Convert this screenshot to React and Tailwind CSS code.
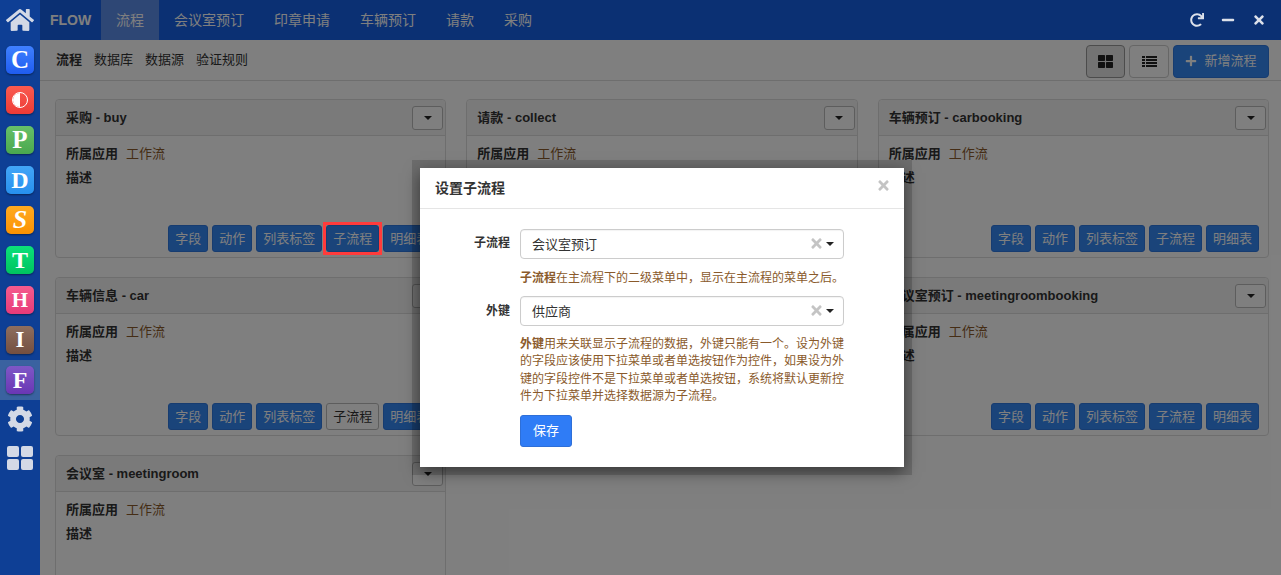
import React from "react";
import { FaHome, FaCog, FaPlus, FaTimes, FaMinus, FaRedo, FaThLarge } from "react-icons/fa";

const cjk = { fontFamily: '"Liberation Sans","Noto Sans CJK SC",sans-serif' };

const logos = [
  ["C", "from-[#3f80ff] to-[#1f5cf0]", "text-[25px]"],
  ["O", "from-[#f95a50] to-[#ee3a35]", "text-[24px]"],
  ["P", "from-[#66c069] to-[#4aa84e]", "text-[25px]"],
  ["D", "from-[#42a5f7] to-[#2690ee]", "text-[24px]"],
  ["S", "from-[#ffaa1f] to-[#fb9200]", "text-[26px] italic"],
  ["T", "from-[#0ce07a] to-[#00c45f]", "text-[24px]"],
  ["H", "from-[#f45b8e] to-[#e83a78]", "text-[21px]"],
  ["I", "from-[#8d6e5f] to-[#744f40]", "text-[23px]"],
  ["F", "from-[#7e57c6] to-[#6a36b4]", "text-[24px]"],
];

function Logo({ l, active }) {
  return (
    <div className={`h-10 flex items-center justify-center ${active ? "bg-[#3a62a0]" : ""}`}>
      <div className={`w-7 h-7 rounded-[5px] bg-gradient-to-b ${l[1]} shadow-[0_1px_2px_rgba(0,0,0,0.45)] flex items-center justify-center text-white font-bold leading-[28px] ${l[2]}`} style={{ fontFamily: '"Liberation Serif",serif' }}>
        {l[0] === "O" ? (
          <span className="relative w-4 h-4 rounded-full border border-white overflow-hidden flex">
            <span className="w-1/2 h-full bg-white" />
          </span>
        ) : l[0]}
      </div>
    </div>
  );
}

function Btn({ children, marked }) {
  return (
    <span className="relative shrink-0 h-[27px] px-[6px] rounded-[3px] bg-[#3488f5] border border-[#2e78e0] text-white flex items-center text-[13px] whitespace-nowrap">
      {children}
      {marked && <span className="absolute -inset-[4px] z-20 border-[3px] border-[#ff3b3b]" />}
    </span>
  );
}

function Caret({ className = "" }) {
  return <span className={`inline-block w-0 h-0 border-x-[4px] border-x-transparent border-t-[4px] border-t-[#222] ${className}`} />;
}

function Card({ name, code, active, marked }) {
  return (
    <div className="h-[159px] rounded-[4px] border border-[#ddd] bg-white flex flex-col">
      <div className="h-[36px] shrink-0 rounded-t-[4px] bg-[#f5f5f5] border-b border-[#ddd] pl-[10px] pr-[2px] flex items-center justify-between">
        <span className="text-[13px] font-bold text-[#333]">{name} - {code}</span>
        <span className="w-[31px] h-[24px] rounded-[3px] border border-[#bbb] bg-white flex items-center justify-center"><Caret /></span>
      </div>
      <div className="flex-1 pt-[6px] pb-[5px] pl-[10px] pr-[9px] flex flex-col text-[13px] text-[#333] leading-[24px]">
        <div><b>所属应用</b><span className="ml-2 text-[#8a5a2b]">工作流</span></div>
        <div><b>描述</b></div>
        <div className="mt-auto flex justify-end gap-[4px]">
          <Btn>字段</Btn>
          <Btn>动作</Btn>
          <Btn>列表标签</Btn>
          {active ? (
            <span className="shrink-0 h-[27px] px-[6px] rounded-[3px] bg-white border border-[#bbb] text-[#333] flex items-center whitespace-nowrap">子流程</span>
          ) : (
            <Btn marked={marked}>子流程</Btn>
          )}
          <Btn>明细表</Btn>
        </div>
      </div>
    </div>
  );
}

function Select({ value }) {
  return (
    <div className="h-[30px] rounded-[4px] border border-[#ccc] bg-white flex items-center pl-[11px] pr-[9px] text-[13px] text-[#333] shadow-[inset_0_1px_1px_rgba(0,0,0,0.05)]">
      <span className="flex-1 pt-[1px]">{value}</span>
      <FaTimes className="text-[#c4c4c4] text-[15px] mr-[2px] -mt-[2px]" />
      <Caret />
    </div>
  );
}

function ThListIcon() {
  return (
    <svg width="15" height="11" viewBox="0 0 15 11" fill="#222">
      <rect x="0" y="0" width="3" height="2" />
      <rect x="4" y="0" width="11" height="2" />
      <rect x="0" y="3" width="3" height="2" />
      <rect x="4" y="3" width="11" height="2" />
      <rect x="0" y="6" width="3" height="2" />
      <rect x="4" y="6" width="11" height="2" />
      <rect x="0" y="9" width="3" height="2" />
      <rect x="4" y="9" width="11" height="2" />
    </svg>
  );
}

export default function App() {
  const tabs = ["印章申请", "车辆预订", "请款", "采购"];
  return (
    <div className="relative h-[575px] w-full overflow-hidden flex bg-white text-[14px]" style={cjk}>
      <aside className="relative z-20 w-10 shrink-0 bg-[#0e3f95] flex flex-col">
        <div className="h-10 flex items-center justify-center text-[#d3d9e6] text-[28px]"><FaHome /></div>
        <div>
          {logos.map((l, i) => <Logo key={l[0]} l={l} active={i === 8} />)}
        </div>
        <div className="h-10 flex items-center justify-center text-[#d3d9e6] text-[26px] -mt-[1px]"><FaCog /></div>
        <div className="h-[38px] flex items-center justify-center">
          <div className="grid grid-cols-2 gap-[2px] w-[26px]">
            <i className="h-[11px] rounded-[2px] bg-[#d3d9e6]" />
            <i className="h-[11px] rounded-[2px] bg-[#d3d9e6]" />
            <i className="h-[11px] rounded-[2px] bg-[#d3d9e6]" />
            <i className="h-[11px] rounded-[2px] bg-[#d3d9e6]" />
          </div>
        </div>
      </aside>

      <main className="flex-1 min-w-0 flex flex-col">
        <header className="h-10 shrink-0 bg-[#1660e6] flex items-center text-white">
          <span className="w-[61px] pl-[10px] font-bold text-[14px]">FLOW</span>
          <span className="w-[58px] h-10 flex items-center justify-center bg-[#5d8eeb]">流程</span>
          <span className="px-[15px]">会议室预订</span>
          {tabs.map(t => <span key={t} className="px-[15px]">{t}</span>)}
          <div className="relative z-20 ml-auto flex items-center gap-[17px] pr-[15px] text-[14px] text-[#dde1ea]">
            <FaRedo />
            <FaMinus />
            <FaTimes />
          </div>
        </header>

        <div className="h-[41px] shrink-0 border-b border-[#ddd] bg-white flex items-center pl-[16px] pr-[12px] gap-[12px] text-[13px] text-[#333]">
          <b>流程</b><span>数据库</span><span>数据源</span><span>验证规则</span>
          <div className="ml-auto flex items-center gap-[4px] mt-[2px]">
            <span className="w-[39px] h-[33px] rounded-[4px] border border-[#999] bg-[#e6e6e6] flex items-center justify-center text-[#222] text-[15px]"><FaThLarge /></span>
            <span className="w-[40px] h-[33px] rounded-[4px] border border-[#ccc] bg-white flex items-center justify-center"><ThListIcon /></span>
            <span className="w-[96px] h-[33px] rounded-[4px] bg-[#3488f5] border border-[#2e78e0] text-white flex items-center justify-center gap-[7px] text-[13px]"><FaPlus className="text-[12px]" />新增流程</span>
          </div>
        </div>

        <div className="flex-1 min-h-0 overflow-hidden pt-[18px] pl-[15px] pr-[12px] grid grid-cols-3 gap-x-[20px] gap-y-[19px] content-start bg-white">
          <Card name="采购" code="buy" marked />
          <Card name="请款" code="collect" />
          <Card name="车辆预订" code="carbooking" />
          <Card name="车辆信息" code="car" active />
          <Card name="印章申请" code="seal" />
          <Card name="会议室预订" code="meetingroombooking" />
          <Card name="会议室" code="meetingroom" />
        </div>
      </main>

      <div className="absolute inset-0 z-10 bg-black/50" />

      <div className="absolute z-30 left-[420px] top-[168px] w-[484px] h-[299px] bg-white shadow-[0_5px_15px_rgba(0,0,0,0.5),0_0_0_8px_rgba(0,0,0,0.15)] flex flex-col">
        <div className="h-[41px] shrink-0 border-b border-[#e5e5e5] pl-[15px] pr-[13px] flex items-center justify-between">
          <b className="text-[14px] text-[#333]">设置子流程</b>
          <FaTimes className="text-[#c4c4c4] text-[15px] -mt-[6px]" />
        </div>
        <div className="pt-[20px] pl-[100px] pr-[60px] flex flex-col text-[#333]">
          <div className="relative">
            <b className="absolute -left-[100px] w-[90px] text-right top-[4px] leading-[20px] text-[12px]">子流程</b>
            <Select value="会议室预订" />
          </div>
          <p className="mt-[11px] mb-[9px] text-[12px] leading-[17px] text-[#8a5a2b] whitespace-nowrap"><b>子流程</b>在主流程下的二级菜单中，显示在主流程的菜单之后。</p>
          <div className="relative">
            <b className="absolute -left-[100px] w-[90px] text-right top-[5px] leading-[20px] text-[12px]">外键</b>
            <Select value="供应商" />
          </div>
          <p className="mt-[10px] w-[327px] text-[12px] leading-[17.3px] text-[#8a5a2b]"><b>外键</b>用来关联显示子流程的数据，外键只能有一个。设为外键的字段应该使用下拉菜单或者单选按钮作为控件，如果设为外键的字段控件不是下拉菜单或者单选按钮，系统将默认更新控件为下拉菜单并选择数据源为子流程。</p>
          <span className="mt-[10px] w-[52px] h-[32px] rounded-[3px] bg-[#2f7cf6] border border-[#2e6fd8] text-white flex items-center justify-center text-[13px]">保存</span>
        </div>
      </div>
    </div>
  );
}
